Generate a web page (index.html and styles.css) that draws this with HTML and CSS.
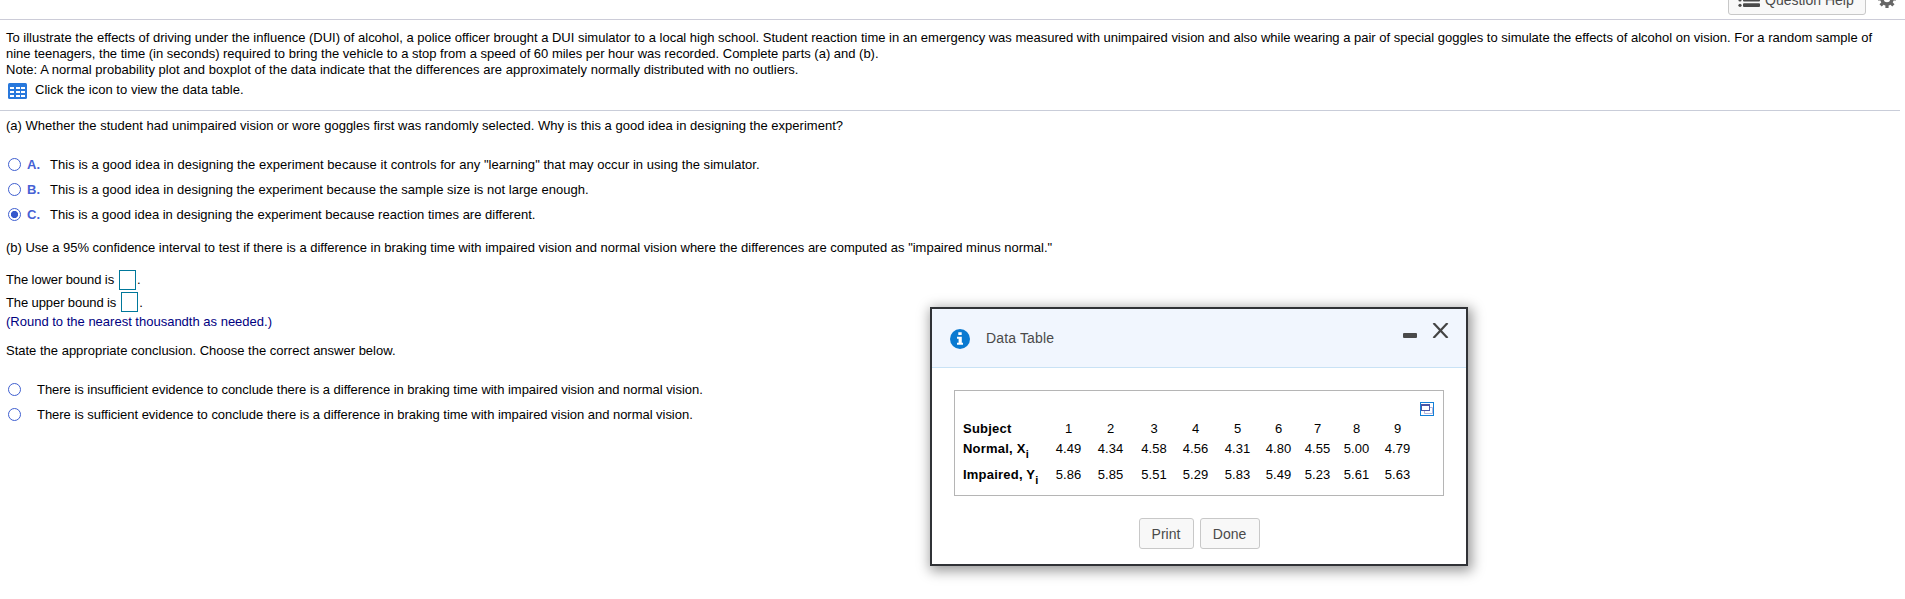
FILE: index.html
```html
<!DOCTYPE html>
<html lang="en">
<head>
    <meta charset="UTF-8">
    <meta name="viewport" content="width=device-width, initial-scale=1.0">
    <title>Question</title>
    <link rel="stylesheet" href="styles.css">
</head>
<body>
    <header class="topbar">
        <button class="btn help-button">
            <svg width="22" height="16" viewBox="0 0 22 16" fill="#4a4a4a">
                <circle cx="2" cy="2.5" r="1.6"/><circle cx="2" cy="8" r="1.6"/><circle cx="2" cy="13.3" r="1.6"/>
                <rect x="5" y="1" width="17" height="3.6" rx="1"/><rect x="5" y="6" width="17" height="3.6" rx="1"/><rect x="5" y="11.3" width="17" height="3.7" rx="1"/>
            </svg>
            <span>Question Help</span>
        </button>
        <svg class="gear" width="18" height="18" viewBox="0 0 18 18">
            <circle cx="9" cy="9" r="5" fill="none" stroke="#666" stroke-width="3.4"/>
            <path d="M9 0v4M9 14v4M0 9h4M14 9h4M2.6 2.6l2.8 2.8M12.6 12.6l2.8 2.8M2.6 15.4l2.8-2.8M12.6 5.4l2.8-2.8" stroke="#666" stroke-width="3.2"/>
        </svg>
    </header>

    <section class="problem">
        <p class="line-1">To illustrate the effects of driving under the influence (DUI) of alcohol, a police officer brought a DUI simulator to a local high school. Student reaction time in an emergency was measured with unimpaired vision and also while wearing a pair of special goggles to simulate the effects of alcohol on vision. For a random sample of</p>
        <p class="line-2">nine teenagers, the time (in seconds) required to bring the vehicle to a stop from a speed of 60 miles per hour was recorded. Complete parts (a) and (b).</p>
        <p class="line-3">Note: A normal probability plot and boxplot of the data indicate that the differences are approximately normally distributed with no outliers.</p>
        <div class="data-link">
            <svg width="19" height="16" viewBox="0 0 19 16">
                <rect width="19" height="16" rx="1.5" fill="#2878dc"/>
                <path d="M2 4h4v2H2zM8 4h4v2H8zM13 4h4v2h-4zM2 8h4v2H2zM8 8h4v2H8zM13 8h4v2h-4zM2 12h4v2H2zM8 12h4v2H8zM13 12h4v2h-4z" fill="#fff"/>
            </svg>
            <span>Click the icon to view the data table.</span>
        </div>
    </section>

    <main class="work">
        <p class="part-a">(a) Whether the student had unimpaired vision or wore goggles first was randomly selected. Why is this a good idea in designing the experiment?</p>
        <div class="choices">
            <label class="choice"><input type="radio" name="a"><b>A.</b><span class="choice-a">This is a good idea in designing the experiment because it controls for any "learning" that may occur in using the simulator.</span></label>
            <label class="choice"><input type="radio" name="a"><b>B.</b><span class="choice-b">This is a good idea in designing the experiment because the sample size is not large enough.</span></label>
            <label class="choice"><input type="radio" name="a" checked><b>C.</b><span class="choice-c">This is a good idea in designing the experiment because reaction times are different.</span></label>
        </div>
        <p class="part-b">(b) Use a 95% confidence interval to test if there is a difference in braking time with impaired vision and normal vision where the differences are computed as "impaired minus normal."</p>
        <div class="bound lower"><span>The lower bound is</span><input type="text">.</div>
        <div class="bound upper"><span>The upper bound is</span><input type="text">.</div>
        <p class="hint">(Round to the nearest thousandth as needed.)</p>
        <p class="state">State the appropriate conclusion. Choose the correct answer below.</p>
        <div class="choices conclusions">
            <label class="choice"><input type="radio" name="b"><span>There is insufficient evidence to conclude there is a difference in braking time with impaired vision and normal vision.</span></label>
            <label class="choice"><input type="radio" name="b"><span>There is sufficient evidence to conclude there is a difference in braking time with impaired vision and normal vision.</span></label>
        </div>
    </main>

    <div class="dialog">
        <div class="dialog-header">
            <svg class="info" width="20" height="20" viewBox="0 0 20 20">
                <circle cx="10" cy="10" r="10" fill="#0a7ad1"/>
                <path d="M8.3 3.2h3.4v2.8H8.3zM7 7.8h4.8v6H13v2H7v-2h1.6v-4H7z" fill="#fff"/>
            </svg>
            <span class="dialog-title">Data Table</span>
            <svg class="minimize" width="14" height="5" viewBox="0 0 14 5"><rect width="14" height="5" rx="1" fill="#4a4a4a"/></svg>
            <svg class="close" width="17" height="15" viewBox="0 0 17 15"><path d="M1.5 0L15.5 15M15.5 0L1.5 15" stroke="#444" stroke-width="2.2"/></svg>
        </div>
        <div class="table-box">
            <svg class="popout" width="14" height="14" viewBox="0 0 14 14">
                <rect x=".5" y=".5" width="13" height="13" fill="#fff" stroke="#1280d8"/>
                <path d="M4.5 9v2.5h8v-6H10" fill="none" stroke="#b5b5dc"/>
                <rect x="1.5" y="3" width="8" height="5.5" fill="#fff" stroke="#4a55a5"/>
                <path d="M1 3h9" stroke="#4a55a5" stroke-width="2"/>
            </svg>
            <table>
                <tr class="subject"><th>Subject</th><td>1</td><td>2</td><td>3</td><td>4</td><td>5</td><td>6</td><td>7</td><td>8</td><td>9</td></tr>
                <tr class="normal"><th>Normal, X<sub>i</sub></th><td>4.49</td><td>4.34</td><td>4.58</td><td>4.56</td><td>4.31</td><td>4.80</td><td>4.55</td><td>5.00</td><td>4.79</td></tr>
                <tr class="impaired"><th>Impaired, Y<sub>i</sub></th><td>5.86</td><td>5.85</td><td>5.51</td><td>5.29</td><td>5.83</td><td>5.49</td><td>5.23</td><td>5.61</td><td>5.63</td></tr>
            </table>
        </div>
        <div class="dialog-buttons">
            <button class="btn print">Print</button>
            <button class="btn done">Done</button>
        </div>
    </div>
</body>
</html>
```
FILE: styles.css
```css
* { box-sizing: border-box; }
body {
    margin: 0;
    height: 599px;
    overflow: hidden;
    background: #fff;
    color: #000;
    font: 13px/16px "Liberation Sans", Arial, sans-serif;
}
p { margin: 0; white-space: nowrap; }
svg { display: block; flex: none; }

.topbar {
    display: flex;
    justify-content: flex-end;
    align-items: flex-end;
    height: 20px;
    border-bottom: 1px solid #ccccd8;
}
.btn {
    border: 1px solid #c8c8c8;
    border-radius: 3px;
    background: #f8f8f8;
    color: #4a4a4a;
    font: 14px/18px "Liberation Sans", Arial, sans-serif;
    padding: 0;
}
.help-button {
    display: flex;
    align-items: center;
    flex: none;
    width: 138px;
    height: 31px;
    margin: 0 12px 4px 0;
    padding: 1px 0 0 9px;
    gap: 5px;
}
.gear { margin: 0 9px 11px 0; }

.problem {
    width: 1900px;
    height: 91px;
    padding: 10px 0 0 6px;
    border-bottom: 1px solid #c9cdd9;
}
.line-1 { letter-spacing: -.0055px; }
.line-2 { letter-spacing: -.012px; }
.line-3 { letter-spacing: .03px; }
.data-link {
    display: flex;
    gap: 8px;
    padding: 4px 0 0 2px;
    letter-spacing: .03px;
}
.data-link svg { margin-top: 1px; }

.work { padding: 7px 0 0 6px; }
.part-a { letter-spacing: .017px; }
.choices { margin-top: 18px; }
.choice {
    display: flex;
    align-items: center;
    height: 25px;
    padding-left: 2px;
    white-space: nowrap;
}
.choice input {
    appearance: none;
    width: 13px;
    height: 13px;
    margin: 0;
    border: 1px solid #3f5fd0;
    border-radius: 50%;
}
.choice input:checked { background: radial-gradient(circle, #3557cc 3.2px, #fff 4px); }
.choice b {
    width: 23px;
    margin-left: 6px;
    color: #4661d4;
}
.choice-a { letter-spacing: .042px; }
.choice-b { letter-spacing: .026px; }
.part-b { margin-top: 13px; letter-spacing: -.013px; }
.bound {
    display: flex;
    height: 22px;
}
.bound span { padding-right: 5px; letter-spacing: -.1px; }
.bound input {
    width: 17px;
    height: 20px;
    margin: -2px 1px 0 0;
    padding: 0;
    border: 1px solid #00789b;
    background: #fff;
}
.lower { margin-top: 16px; }
.upper { margin-top: 1px; }
.upper input { margin-top: -3px; }
.hint { color: #00007f; margin-top: -3px; }
.state { margin-top: 13px; }
.conclusions { margin-top: 18px; }
.conclusions .choice span { margin-left: 16px; letter-spacing: -.03px; }

/* floating window */
.dialog {
    position: absolute;
    left: 930px;
    top: 307px;
    width: 538px;
    height: 259px;
    border: 2px solid #303236;
    background: #fff;
    box-shadow: 2px 3px 12px 2px rgba(0, 0, 0, .4);
}
.dialog-header {
    display: flex;
    height: 59px;
    padding-left: 18px;
    background: #f1f6fe;
    border-bottom: 1px solid #c9e2f5;
}
.info { margin-top: 20px; }
.dialog-title {
    margin: 20px auto 0 16px;
    color: #4a4a4a;
    font-size: 14px;
    line-height: 18px;
    letter-spacing: .15px;
}
.minimize { margin: 24px 15px 0 0; }
.close { margin: 14px 17px 0 0; }
.table-box {
    width: 490px;
    height: 106px;
    margin: 22px 0 0 22px;
    border: 1px solid #b5b5b5;
}
.popout { margin: 11px 0 0 465px; }
table {
    display: grid;
    margin: 5px 0 0 8px;
}
tbody { display: contents; }
tr {
    display: grid;
    grid-template-columns: 85px 41px 43px 44px 39px 45px 37px 41px 37px 45px;
    height: 20px;
}
th, td { padding: 0; white-space: nowrap; }
th { text-align: left; letter-spacing: .22px; }
td { text-align: center; }
.normal { height: 26px; }
sub {
    font-size: 11px;
    line-height: 0;
    vertical-align: -5px;
}
.dialog-buttons {
    display: flex;
    justify-content: center;
    gap: 6px;
    margin-top: 22px;
}
.dialog-buttons .btn { height: 31px; }
.print { width: 55px; }
.done { width: 60px; }
```
